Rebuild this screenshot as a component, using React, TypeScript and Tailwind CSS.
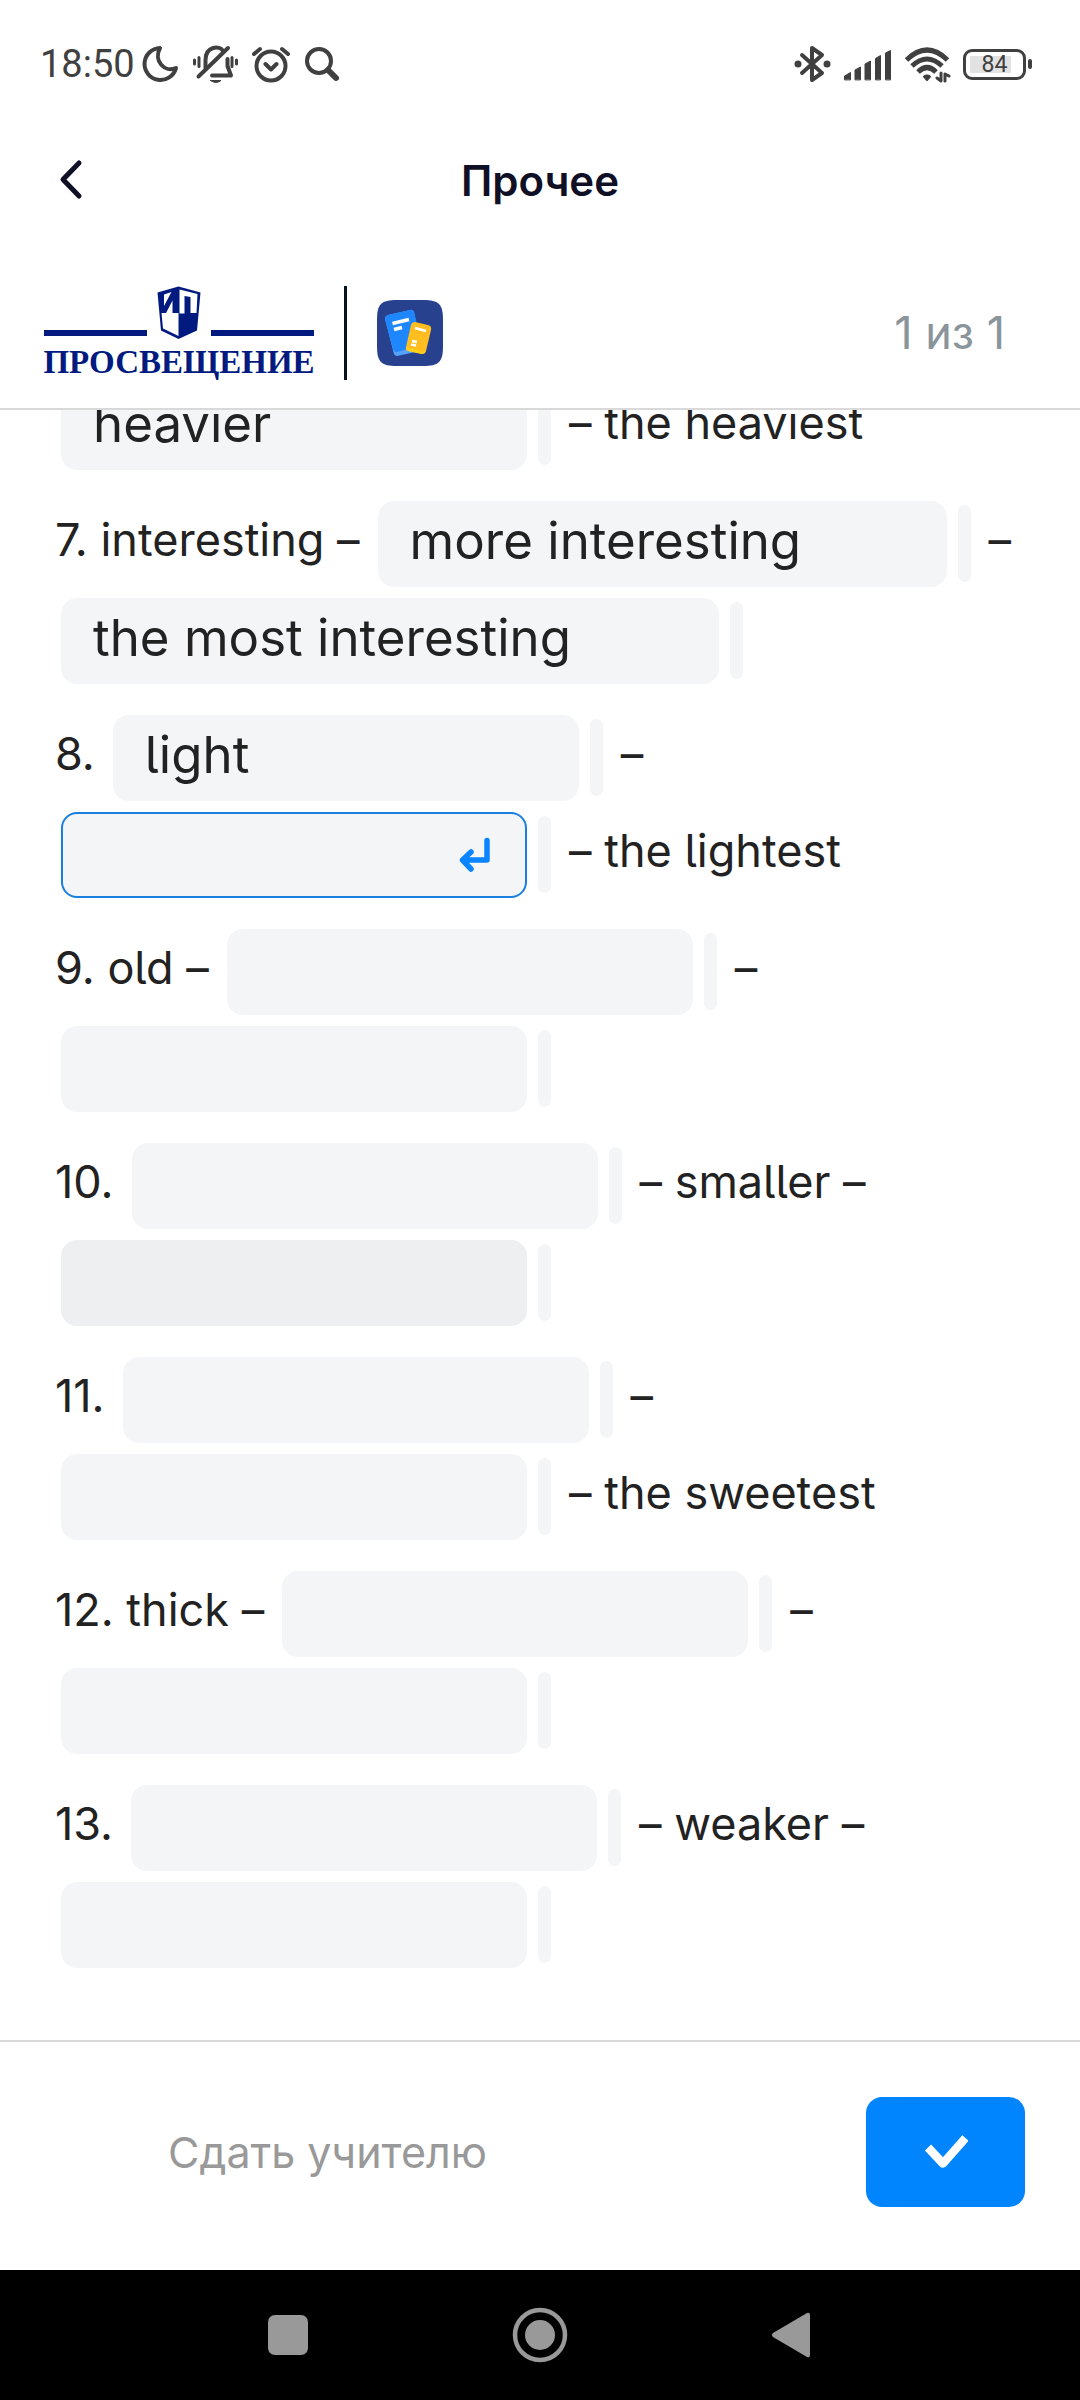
import React from "react";

type Part = string | { value?: string; w?: string; bg?: string; active?: boolean; label: string };
type Line = Part[];

const W = "w-[466px]";

const tasks: Line[][] = [
  [[{ value: "heavier", label: "6, comparative" }, "– the heaviest"]],
  [
    ["7. interesting –", { value: "more interesting", w: "w-[569px]", label: "7, comparative" }, "–"],
    [{ value: "the most interesting", w: "w-[658px]", label: "7, superlative" }],
  ],
  [
    ["8.", { value: "light", label: "8, positive" }, "–"],
    [{ active: true, label: "8, comparative" }, "– the lightest"],
  ],
  [["9. old –", { label: "9, comparative" }, "–"], [{ label: "9, superlative" }]],
  [["10.", { label: "10, positive" }, "– smaller –"], [{ bg: "bg-[#eeeff1]", label: "10, superlative" }]],
  [["11.", { label: "11, positive" }, "–"], [{ label: "11, comparative" }, "– the sweetest"]],
  [["12. thick –", { label: "12, comparative" }, "–"], [{ label: "12, superlative" }]],
  [["13.", { label: "13, positive" }, "– weaker –"], [{ label: "13, superlative" }]],
];

function EnterIcon() {
  return (
    <svg className="h-9 w-8" viewBox="0 0 32 36" fill="none" stroke="#0a85ff" strokeWidth="5.500" strokeLinecap="round" strokeLinejoin="round">
      <path d="M28 4.500V24H4.500M12 16L3.500 24L12 33" />
    </svg>
  );
}

function Blank({ part }: { part: Exclude<Part, string> }) {
  return (
    <span className="flex items-center gap-[11px]">
      <span className={`relative flex h-[86px] items-center ${part.w ?? W}`}>
        <input
          type="text"
          aria-label={part.label}
          defaultValue={part.value}
          className={`h-full w-full rounded-2xl px-8 pb-1.5 text-[51px] text-[#222] outline-none ${part.bg ?? "bg-[#f3f5f7]"} ${
            part.active ? "border-2 border-[#1a80e0]" : ""
          }`}
        />
        {part.active && (
          <button type="button" aria-label="Enter" className="absolute top-6 right-9">
            <EnterIcon />
          </button>
        )}
      </span>
      <span className="h-[77px] w-[13px] rounded-full bg-[#f3f5f7]" />
    </span>
  );
}

function StatusBar() {
  return (
    <div className="flex h-32 items-center justify-between pr-12 pl-10 text-[#404040]">
      <div className="flex items-center">
        <span className="font-['Roboto',sans-serif] text-[38px]">18:50</span>
        <svg className="ml-1.5 h-10 w-[200px]" viewBox="0 0 200 40" fill="none" stroke="currentColor" strokeWidth="4" strokeLinecap="round" strokeLinejoin="round">
          <path d="M19 4A16 16 0 1 0 35 24C24 29 12 17 19 4Z" />
          <g>
            <path d="M64.500 24V16C64.500 2 79 1 82 7M86.500 15V22L90 31.500H71" />
            <path d="M57.500 32.500L87 4" />
            <path d="M69.500 36.500H80Q75 40.500 69.500 36.500Z" fill="currentColor" strokeWidth="1" />
            <path d="M53.500 16v4M58 13.500v9M91 13.500v9M95.500 16v4" strokeWidth="3" />
          </g>
          <g>
            <circle cx="130" cy="22" r="14.500" />
            <path d="M124.500 20L130 25.500L135.500 20M113 10L119 5M141 5L147 10" />
          </g>
          <g>
            <circle cx="178" cy="17" r="12" />
            <path d="M187 26L195 34" strokeWidth="6" />
          </g>
        </svg>
      </div>
      <div className="flex items-center gap-3">
        <svg className="h-10 w-[158px]" viewBox="0 0 158 40" fill="none" stroke="currentColor" strokeWidth="4" strokeLinecap="round" strokeLinejoin="round">
          <path d="M9 11L29 29L19 36V4L29 11L9 29" />
          <circle cx="5" cy="20" r="3.500" fill="currentColor" stroke="none" />
          <circle cx="34" cy="20" r="3.500" fill="currentColor" stroke="none" />
          <path
            d="M51.500 35.500V32L57.500 28.500V35.500ZM62 35.500V26L67.500 23V35.500ZM72 35.500V20L77.500 17V35.500ZM82.500 35.500V14.500L87.500 11.500V35.500ZM92.500 35.500V9L97.500 6.500V35.500Z"
            fill="currentColor"
            strokeWidth="1"
          />
          <path d="M113.500 16Q134 -4 154.500 16M119 22Q134 8 149 22M125 28Q134 19 143 28" strokeWidth="5" strokeLinecap="butt" />
          <path d="M131 32.500Q134 30.500 137 32.500L134 36Z" fill="currentColor" strokeWidth="2" />
          <path d="M144 34L148 37V29M156 32L152 30V37" strokeWidth="3" />
        </svg>
        <div className="flex items-center gap-0.5">
          <span className="flex h-[31px] w-[63px] items-center justify-center rounded-[9px] border-3 border-[#404040] p-1">
            <span className="flex h-full w-full items-center justify-center bg-[linear-gradient(90deg,#e2e2e2_84%,transparent_84%)] font-['Roboto',sans-serif] text-[23px] leading-none">84</span>
          </span>
          <span className="h-[10px] w-1 rounded-full bg-[#404040]" />
        </div>
      </div>
    </div>
  );
}

function PublisherLogo() {
  return (
    <div className="flex w-[270px] flex-col items-center text-[#001a80]">
      <div className="flex w-full items-center justify-between">
        <span className="mt-10 h-[6px] w-[103px] bg-[#001a80]" />
        <svg className="h-[54px] w-11" viewBox="0 0 44 54">
          <path d="M0.500 6.500L21.500 0.500L43.500 6.500L40 44.500L21.500 53L4 44.500Z" fill="#001a80" />
          <path d="M21.500 27H4.500L6 42.500L21.500 50Z" fill="#fff" />
          <path d="M22.500 3.500L40.500 8L39.500 27H33.500V11L27.500 10V27.500H22.500Z" fill="#fff" />
          <path d="M7 8.500L14.500 6L7 20ZM15.500 14.500V28H8.500Z" fill="#fff" />
        </svg>
        <span className="mt-10 h-[6px] w-[103px] bg-[#001a80]" />
      </div>
      <span className="mt-1 font-['Liberation_Serif',serif] text-[33px] leading-9 font-bold">ПРОСВЕЩЕНИЕ</span>
    </div>
  );
}

function AppBadge() {
  return (
    <svg className="h-[66px] w-[66px]" viewBox="0 0 66 66">
      <path d="M0 20C0 4 4 0 20 0H46C62 0 66 4 66 20V46C66 62 62 66 46 66H20C4 66 0 62 0 46Z" fill="#27418f" />
      <path d="M11 15L33 10Q36 9 37 12L45 47Q45 50 43 51L20 56Q18 56 17 54L8 19Q8 16 11 15Z" fill="#56a3ff" />
      <path d="M11 15L33 10Q36 9 37 12L44 45L20 52Q18 53 16 49L8 19Q8 16 11 15Z" fill="#1e86ff" />
      <path d="M38 22L51 25Q55 26 54 30L49 51Q48 54 45 54L31 51Q28 50 29 47L34 25Q35 22 38 22Z" fill="#ffbd1f" />
      <path d="M29 47L46 52L49 49L48 53L45 54L31 51Z" fill="#ffd21a" />
      <path d="M15.500 23.500L32 19.500M17 29.500L25 27.500" stroke="#fff" strokeWidth="3.500" />
      <path d="M38 28L49 31M35 41L40 42M34 44.500L39 45.500" stroke="#fff" strokeWidth="2.500" />
    </svg>
  );
}

export default function App() {
  return (
    <div className="flex h-screen flex-col bg-white font-['Inter',sans-serif] text-[#222] [font-feature-settings:'cv05']">
      <StatusBar />
      <header className="grid h-[105px] grid-cols-[1fr_auto_1fr] items-center px-[55px] text-[#0f0f26]">
        <button type="button" aria-label="Назад" className="justify-self-start">
          <svg className="h-11 w-8" viewBox="0 0 32 44" fill="none" stroke="currentColor" strokeWidth="5" strokeLinecap="round" strokeLinejoin="round">
            <path d="M24 4L8 20.500L24 37" />
          </svg>
        </button>
        <h1 className="text-[42px] font-semibold">Прочее</h1>
      </header>
      <div className="flex h-[177px] items-center justify-between border-b-2 border-[#d9d9d9] pt-6 pr-[75px] pl-11">
        <div className="flex items-center gap-[30px]">
          <PublisherLogo />
          <span className="h-[94px] w-[3px] bg-[#06141f]" />
          <AppBadge />
        </div>
        <span className="text-[45px] text-[#8a949b]">1 из 1</span>
      </div>

      <main className="flex min-h-0 flex-1 flex-col justify-end gap-5 overflow-hidden pr-10 pb-[67px] pl-[55px] text-[45px]">
        {tasks.map((lines, i) => (
          <div key={i} className="shrink-0">
            {lines.map((line, j) => (
              <div key={j} className={`flex h-[97px] items-center gap-[18px] whitespace-nowrap ${typeof line[0] === "string" ? "" : "pl-[6px]"}`}>
                {line.map((part, k) =>
                  typeof part === "string" ? (
                    <span key={k} className="pb-2">
                      {part}
                    </span>
                  ) : (
                    <Blank key={k} part={part} />
                  ),
                )}
              </div>
            ))}
          </div>
        ))}
      </main>

      <footer className="flex h-[230px] items-center justify-between border-t-2 border-[#d9d9d9] pr-[55px] pb-2 pl-[168px]">
        <button type="button" className="text-[43px] text-[#999]">
          Сдать учителю
        </button>
        <button type="button" aria-label="Проверить" className="flex h-[110px] w-[159px] items-center justify-center rounded-2xl bg-[#0085ff]">
          <svg className="h-9 w-11" viewBox="0 0 44 36" fill="none" stroke="#fff" strokeWidth="8.500" strokeLinejoin="round">
            <path d="M4 13.500L19 29.500L41.500 4" />
          </svg>
        </button>
      </footer>
      <nav className="grid h-[130px] grid-cols-3 items-center bg-black px-[162px]">
        <button type="button" aria-label="Недавние" className="justify-self-center">
          <svg className="h-10 w-10" viewBox="0 0 40 40">
            <rect width="40" height="40" rx="7" fill="#999" />
          </svg>
        </button>
        <button type="button" aria-label="Домой" className="justify-self-center">
          <svg className="h-14 w-14" viewBox="0 0 56 56">
            <circle cx="28" cy="28" r="25" fill="none" stroke="#999" strokeWidth="4.500" />
            <circle cx="28" cy="28" r="15" fill="#999" />
          </svg>
        </button>
        <button type="button" aria-label="Назад" className="justify-self-center">
          <svg className="h-[46px] w-10" viewBox="0 0 40 46">
            <path d="M1 21L35 1Q38 0 38 3V43Q38 46 35 45L1 25Q-1 23 1 21Z" fill="#999" />
          </svg>
        </button>
      </nav>
    </div>
  );
}
